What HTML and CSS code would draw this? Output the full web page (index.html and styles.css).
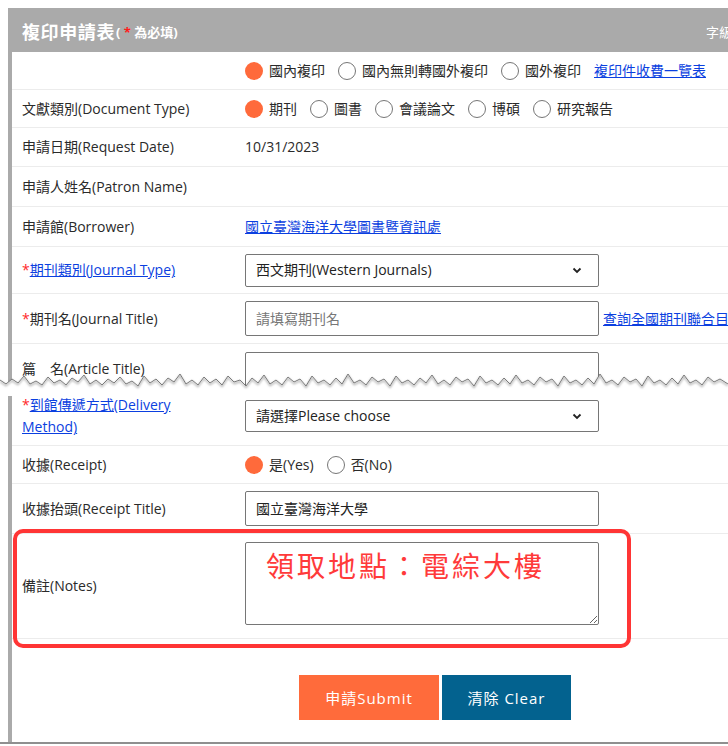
FILE: index.html
```html
<!DOCTYPE html>
<html lang="zh-Hant">
<head>
<meta charset="utf-8">
<title>複印申請表</title>
<link rel="stylesheet" href="styles.css">
</head>
<body>
<div class="sheet-top">
  <div class="panel">
    <div class="panel-head">
      <span class="title">複印申請表</span><span class="req">( <span class="star">*</span> 為必填)</span>
      <span class="fontsize">字級大小</span>
    </div>
    <div class="body">
      <div class="row h38">
        <div class="label"></div>
        <div class="value">
          <span class="radio"><span class="dot on"></span>國內複印</span>
          <span class="radio"><span class="dot"></span>國內無則轉國外複印</span>
          <span class="radio"><span class="dot"></span>國外複印</span>
          <a class="link" href="#">複印件收費一覽表</a>
        </div>
      </div>
      <div class="row h38">
        <div class="label">文獻類別(Document Type)</div>
        <div class="value">
          <span class="radio"><span class="dot on"></span>期刊</span>
          <span class="radio"><span class="dot"></span>圖書</span>
          <span class="radio"><span class="dot"></span>會議論文</span>
          <span class="radio"><span class="dot"></span>博碩</span>
          <span class="radio"><span class="dot"></span>研究報告</span>
        </div>
      </div>
      <div class="row h39">
        <div class="label">申請日期(Request Date)</div>
        <div class="value">10/31/2023</div>
      </div>
      <div class="row h40">
        <div class="label">申請人姓名(Patron Name)</div>
        <div class="value"></div>
      </div>
      <div class="row h40">
        <div class="label">申請館(Borrower)</div>
        <div class="value"><a class="link" href="#">國立臺灣海洋大學圖書暨資訊處</a></div>
      </div>
      <div class="row h47">
        <div class="label"><span class="star">*</span><a class="link" href="#">期刊類別(Journal Type)</a></div>
        <div class="value">
          <div class="field select"><span>西文期刊(Western Journals)</span>
            <svg class="chev" width="10" height="7" viewBox="0 0 10 7"><path d="M1.5 1.5 5 5 8.5 1.5" fill="none" stroke="#222" stroke-width="1.8"/></svg>
          </div>
        </div>
      </div>
      <div class="row h50">
        <div class="label"><span class="star">*</span>期刊名(Journal Title)</div>
        <div class="value">
          <div class="field tall placeholder">請填寫期刊名</div>
          <a class="link side" href="#">查詢全國期刊聯合目錄</a>
        </div>
      </div>
      <div class="row h60 top">
        <div class="label">篇　名(Article Title)</div>
        <div class="value"><div class="field tall"></div></div>
      </div>
    </div>
  </div>
  <svg class="tear" width="728" height="30" viewBox="0 0 728 30">
    <defs>
      <filter id="sh" x="-5%" y="-50%" width="110%" height="200%">
        <feDropShadow dx="0" dy="1.5" stdDeviation="1.2" flood-color="#000" flood-opacity="0.6"/>
      </filter>
    </defs>
    <polygon fill="#fff" points="0,14 6,18 12,13 18,17 24,10 30,18 36,15 42,19 48,11 54,17 60,14 66,19 72,12 78,16 84,9 90,18 96,14 102,19 108,13 114,17 120,11 126,18 132,15 138,20 144,10 150,17 156,13 162,19 168,12 174,16 180,8 186,18 192,14 198,19 204,11 210,17 216,13 222,19 228,10 234,16 240,14 246,20 252,12 258,17 264,9 270,18 276,14 282,19 288,11 294,16 300,13 306,20 312,10 318,17 324,14 330,19 336,12 342,18 348,8 354,17 360,14 366,19 372,11 378,16 384,13 390,20 396,10 402,17 408,14 414,19 420,12 426,17 432,9 438,18 444,14 450,19 456,11 462,16 468,13 474,20 480,10 486,17 492,14 498,19 504,12 510,18 516,9 522,17 528,14 534,19 540,11 546,16 552,13 558,20 564,10 570,17 576,14 582,19 588,12 594,18 600,8 606,17 612,14 618,19 624,11 630,16 636,13 642,20 648,10 654,17 660,14 666,19 672,12 678,18 684,9 690,17 696,14 702,19 708,11 714,16 720,13 728,18 728,30 0,30"/>
    <polyline fill="none" stroke="#7a7a7a" stroke-width="1" filter="url(#sh)" points="0,14 6,18 12,13 18,17 24,10 30,18 36,15 42,19 48,11 54,17 60,14 66,19 72,12 78,16 84,9 90,18 96,14 102,19 108,13 114,17 120,11 126,18 132,15 138,20 144,10 150,17 156,13 162,19 168,12 174,16 180,8 186,18 192,14 198,19 204,11 210,17 216,13 222,19 228,10 234,16 240,14 246,20 252,12 258,17 264,9 270,18 276,14 282,19 288,11 294,16 300,13 306,20 312,10 318,17 324,14 330,19 336,12 342,18 348,8 354,17 360,14 366,19 372,11 378,16 384,13 390,20 396,10 402,17 408,14 414,19 420,12 426,17 432,9 438,18 444,14 450,19 456,11 462,16 468,13 474,20 480,10 486,17 492,14 498,19 504,12 510,18 516,9 522,17 528,14 534,19 540,11 546,16 552,13 558,20 564,10 570,17 576,14 582,19 588,12 594,18 600,8 606,17 612,14 618,19 624,11 630,16 636,13 642,20 648,10 654,17 660,14 666,19 672,12 678,18 684,9 690,17 696,14 702,19 708,11 714,16 720,13 728,18"/>
  </svg>
</div>

<div class="sheet-bottom">
  <div class="body">
    <div class="row h50 top">
      <div class="label two-line"><span class="star">*</span><a class="link" href="#">到館傳遞方式(Delivery<br>Method)</a></div>
      <div class="value">
        <div class="field select short"><span>請選擇Please choose</span>
          <svg class="chev" width="10" height="7" viewBox="0 0 10 7"><path d="M1.5 1.5 5 5 8.5 1.5" fill="none" stroke="#222" stroke-width="1.8"/></svg>
        </div>
      </div>
    </div>
    <div class="row h38">
      <div class="label">收據(Receipt)</div>
      <div class="value">
        <span class="radio"><span class="dot on"></span>是(Yes)</span>
        <span class="radio"><span class="dot"></span>否(No)</span>
      </div>
    </div>
    <div class="row h50">
      <div class="label">收據抬頭(Receipt Title)</div>
      <div class="value"><div class="field tall">國立臺灣海洋大學</div></div>
    </div>
    <div class="row notes-row">
      <div class="label">備註(Notes)</div>
      <div class="value"><textarea class="notes">領取地點：電綜大樓</textarea></div>
      <div class="mark"></div>
    </div>
    <div class="actions">
      <button class="btn submit" type="button">申請Submit</button>
      <button class="btn clear" type="button">清除 Clear</button>
    </div>
  </div>
</div>
<div class="baseline"></div>
</body>
</html>
```

FILE: styles.css
```css
html, body {
  margin: 0;
  padding: 0;
  background: #fff;
}
body {
  width: 728px;
  height: 746px;
  overflow: hidden;
  font-family: "Open Sans", "Noto Sans CJK TC", sans-serif;
  font-size: 14px;
  color: #2a2a2a;
}

.sheet-top {
  position: relative;
  height: 396px;
  overflow: hidden;
  padding: 8px 0 0 8px;
  box-sizing: border-box;
}
.panel {
  width: 760px;
}
.panel-head {
  height: 44px;
  background: #aaaaaa;
  color: #fff;
  display: flex;
  align-items: center;
  padding: 2px 10px 0 14px;
  box-sizing: border-box;
  font-weight: bold;
}
.title {
  font-size: 18px;
  letter-spacing: 0.6px;
}
.req {
  font-size: 13px;
  margin-left: 1px;
}
.req .star {
  color: #ff1a1a;
}
.fontsize {
  margin-left: auto;
  font-size: 13px;
  font-weight: normal;
}

.body {
  width: 760px;
  border-left: 4px solid #aaaaaa;
  box-sizing: border-box;
}
.row {
  display: grid;
  grid-template-columns: 233px 1fr;
  align-items: center;
  border-bottom: 1px solid #ececec;
  box-sizing: border-box;
  position: relative;
}
.h38 { height: 38px; }
.h39 { height: 39px; }
.h40 { height: 40px; }
.h47 { height: 47px; }
.h50 { height: 50px; }
.h60 { height: 60px; }
.row.top { align-items: start; }
.row.top .field { margin-top: 8px; }
.row.top .label { padding-top: 15px; }

.label {
  padding-left: 10px;
  line-height: 20px;
  white-space: nowrap;
}
.label .star {
  color: #ff2a2a;
}
.label.two-line {
  line-height: 22px;
}
.row.top .label.two-line {
  padding-top: 0;
  margin-top: -2px;
}
.value {
  display: flex;
  align-items: center;
  line-height: 20px;
  white-space: nowrap;
}

.link {
  color: #0b3fe0;
  text-decoration: underline;
}
.link.side {
  margin-left: 4px;
}

.radio {
  display: inline-flex;
  align-items: center;
  margin-right: 13px;
}
.dot {
  width: 18px;
  height: 18px;
  border-radius: 50%;
  border: 1px solid #767676;
  box-sizing: border-box;
  background: #fff;
  margin-right: 6px;
}
.dot.on {
  border: none;
  background: #ff6a3b;
}

.field {
  width: 354px;
  height: 33px;
  border: 1px solid #767676;
  border-radius: 2px;
  box-sizing: border-box;
  padding: 0 10px;
  display: flex;
  align-items: center;
  color: #222;
  background: #fff;
}
.field.tall { height: 35px; }
.field.short { height: 32px; }
.field.placeholder { color: #777; }
.select { justify-content: space-between; }
.chev { margin-right: 6px; }
.row.top .field.select { margin-top: 4px; }

.notes-row {
  height: 105px;
}
.notes-row .value {
  align-self: start;
  padding-top: 8px;
}
.notes {
  width: 354px;
  height: 83px;
  box-sizing: border-box;
  border: 1px solid #767676;
  border-radius: 2px;
  padding: 5px 10px 0 20px;
  font-family: "Noto Sans CJK TC", sans-serif;
  font-size: 28px;
  line-height: 34px;
  letter-spacing: 3px;
  color: #ff3a3a;
  resize: both;
  margin: 0;
}
.mark {
  position: absolute;
  left: 1px;
  top: -5px;
  width: 618px;
  height: 119px;
  border: 4px solid #ff3535;
  border-radius: 10px;
  box-sizing: border-box;
  pointer-events: none;
}

.actions {
  display: flex;
  gap: 3px;
  padding: 36px 0 22px 287px;
}
.btn {
  height: 45px;
  border: none;
  color: #fff;
  font-family: "Open Sans", "Noto Sans CJK TC", sans-serif;
  font-size: 15px;
  letter-spacing: 1px;
  padding: 0;
}
.submit {
  width: 140px;
  background: #ff6b3b;
}
.clear {
  width: 129px;
  background: #03628f;
}

.tear {
  position: absolute;
  left: 0;
  bottom: 0;
  display: block;
}
.sheet-bottom {
  padding-left: 8px;
}
.baseline {
  width: 728px;
  height: 2px;
  background: #8f8f8f;
}
```
